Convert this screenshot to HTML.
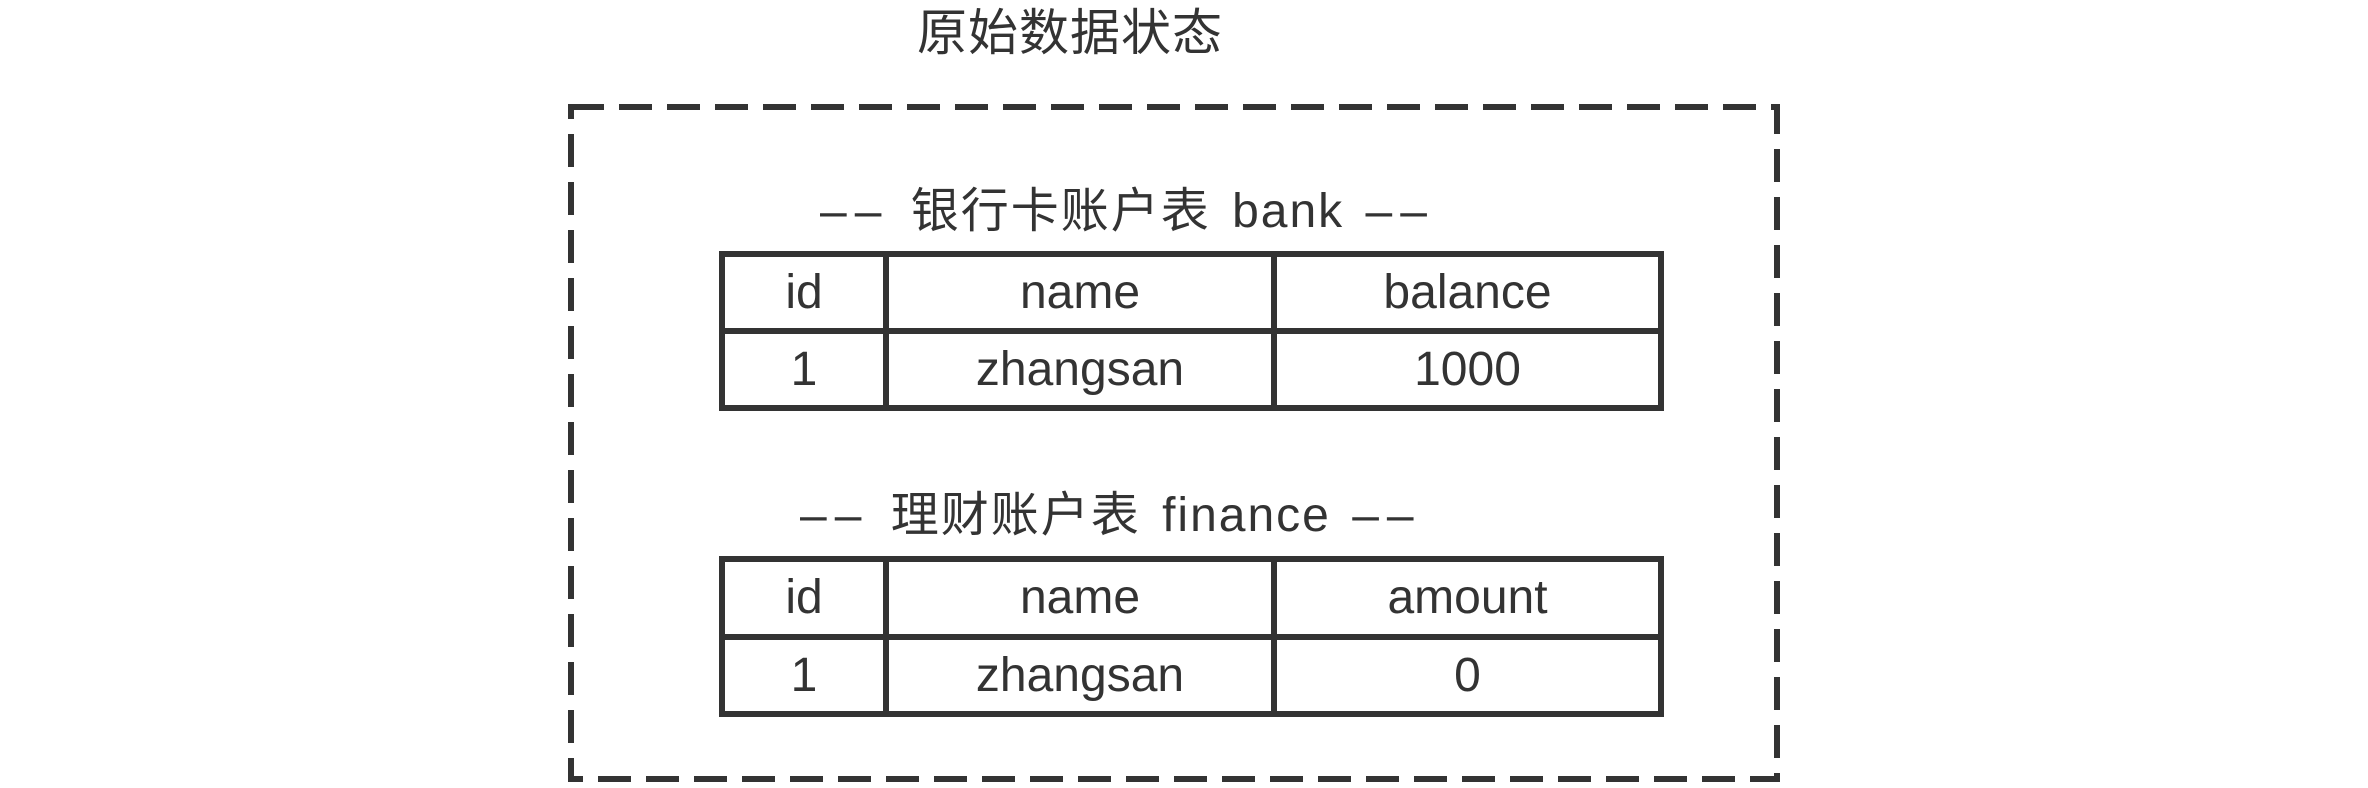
<!DOCTYPE html>
<html><head><meta charset="utf-8"><style>
html,body{margin:0;padding:0;background:#fff;}
body{width:2368px;height:788px;position:relative;overflow:hidden;font-family:"Liberation Sans","Noto Sans CJK SC",sans-serif;color:#333;}
.t{position:absolute;white-space:nowrap;line-height:1;}
.d{letter-spacing:8px;}
table{position:absolute;border-collapse:collapse;}
td{border:6px solid #333;text-align:center;font-size:48px;color:#333;padding:0;}
</style></head><body>
<div class="t" style="left:917px;top:8px;font-size:50px;letter-spacing:1px;">原始数据状态</div>
<svg style="position:absolute;left:0;top:0" width="2368" height="788">
<rect x="571" y="107" width="1206" height="672" fill="none" stroke="#333" stroke-width="6" stroke-dasharray="33 15"/>
</svg>
<div class="t" style="left:820px;top:188px;font-size:48px;letter-spacing:2px;word-spacing:6px;"><span class="d">––</span> 银行卡账户表 bank <span class="d">––</span></div>
<table style="left:719px;top:251px;width:945px;height:160px;">
<tr><td style="width:158px">id</td><td style="width:382px">name</td><td>balance</td></tr>
<tr><td>1</td><td>zhangsan</td><td>1000</td></tr>
</table>
<div class="t" style="left:800px;top:492px;font-size:48px;letter-spacing:2px;word-spacing:6px;"><span class="d">––</span> 理财账户表 finance <span class="d">––</span></div>
<table style="left:719px;top:556px;width:945px;height:161px;">
<tr><td style="width:158px">id</td><td style="width:382px">name</td><td>amount</td></tr>
<tr><td>1</td><td>zhangsan</td><td>0</td></tr>
</table>
</body></html>
